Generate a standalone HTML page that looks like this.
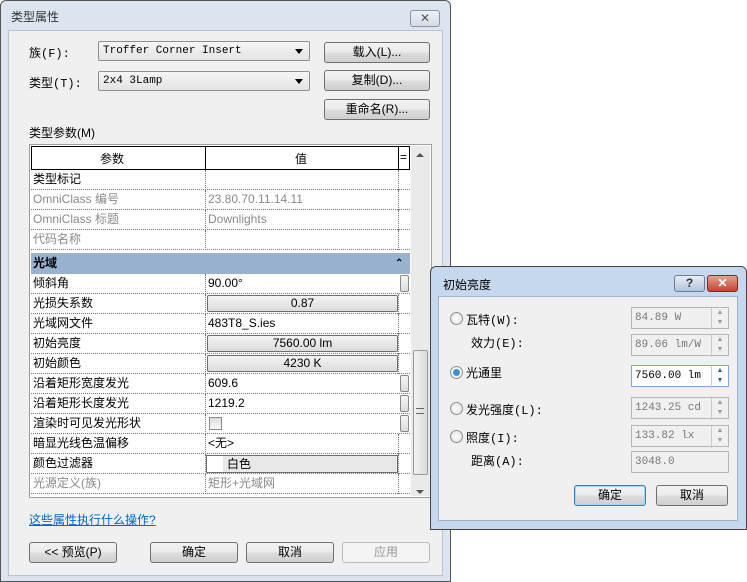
<!DOCTYPE html>
<html><head><meta charset="utf-8">
<style>
*{margin:0;padding:0;box-sizing:border-box}
body{width:747px;height:582px;background:#fff;position:relative;overflow:hidden;font-family:"Liberation Sans","Noto Sans CJK SC",sans-serif;font-size:12px;color:#000}
.a{position:absolute}
.mono{font-family:"Liberation Mono","Noto Sans CJK SC",monospace;font-size:11px}
.btn{position:absolute;border:1px solid #707070;border-radius:3px;background:linear-gradient(#f2f2f2,#ebebeb 50%,#dddddd 51%,#cfcfcf);text-align:center;font-size:12px;line-height:19px}
.combo{position:absolute;border:1px solid #8e8f8f;border-radius:2px;background:linear-gradient(#f6f6f6,#e4e4e4);padding-left:4px;line-height:18px}
.combo:after{content:"";position:absolute;right:6px;top:7px;border-left:4px solid transparent;border-right:4px solid transparent;border-top:5px solid #000}
.row{position:absolute;left:31px;width:379px;height:20px;border-bottom:1px dotted #777;line-height:19px}
.row .p{position:absolute;left:2px;top:0}
.row .v{position:absolute;left:177px;top:0}
.row .d1{position:absolute;left:174px;top:0;height:20px;border-left:1px dotted #777}
.row .d2{position:absolute;left:367px;top:0;height:20px;border-left:1px dotted #777}
.g{color:#8a8a8a}
.vb{position:absolute;left:176px;top:1px;width:191px;height:17px;border:1px solid #6e6e6e;border-radius:2px;background:linear-gradient(#f4f4f4,#dcdcdc);text-align:center;line-height:15px}
.sp{position:absolute;left:369px;top:1px;width:9px;height:17px;border:1px solid #888;border-radius:2px;background:linear-gradient(#f6f6f6,#dcdcdc)}
.rad{position:absolute;width:13px;height:13px;border-radius:50%;border:1px solid #8e8f8f;background:radial-gradient(#fff,#ddd)}
.tb{position:absolute;border:1px solid #b5b5b5;background:#f0f0f0;color:#777;padding-left:3px;line-height:20px}
.spin{position:absolute;width:17px;height:22px;border-left:1px solid #ccc}
</style></head><body>
<!-- main window -->
<div class="a" style="left:0;top:0;width:451px;height:582px;background:#dce5ef;border:1px solid #555;border-radius:6px 6px 0 0"></div>
<div class="a" style="left:11px;top:8px;color:#333;font-size:12px">类型属性</div>
<div class="a" style="left:410px;top:10px;width:30px;height:17px;border:1px solid #8a96a8;border-radius:3px;background:linear-gradient(#eef2f7,#d3dbe6);text-align:center;font-size:12px;line-height:15px;color:#555">✕</div>
<div class="a" style="left:8px;top:30px;width:435px;height:546px;background:#f0f0f0;border:1px solid #b8c4d2"></div>

<div class="a mono" style="left:29px;top:44px;font-size:12px">族(F):</div>
<div class="combo mono" style="left:98px;top:41px;width:212px;height:20px">Troffer Corner Insert</div>
<div class="btn" style="left:324px;top:42px;width:106px;height:21px">载入(L)...</div>
<div class="a mono" style="left:29px;top:74px;font-size:12px">类型(T):</div>
<div class="combo mono" style="left:98px;top:71px;width:212px;height:20px">2x4 3Lamp</div>
<div class="btn" style="left:324px;top:70px;width:106px;height:21px">复制(D)...</div>
<div class="btn" style="left:324px;top:99px;width:106px;height:21px">重命名(R)...</div>
<div class="a" style="left:29px;top:124px;font-size:12px">类型参数(M)</div>

<!-- table -->
<div class="a" style="left:29px;top:144px;width:403px;height:354px;background:#fff;border:1px solid #a0a0a0"></div>
<div class="a" style="left:31px;top:146px;width:379px;height:24px;border:1px solid #000;background:#fff"></div>
<div class="a" style="left:205px;top:146px;width:1px;height:24px;background:#000"></div>
<div class="a" style="left:398px;top:146px;width:1px;height:24px;background:#000"></div>
<div class="a" style="left:100px;top:150px">参数</div>
<div class="a" style="left:295px;top:150px">值</div>
<div class="a" style="left:400px;top:150px">=</div>
<div class="a" style="left:411px;top:146px;width:19px;height:350px;background:#eaeaea"></div>
<div class="a" style="left:416px;top:153px;border-left:4px solid transparent;border-right:4px solid transparent;border-bottom:4px solid #555"></div>
<div class="a" style="left:416px;top:490px;border-left:4px solid transparent;border-right:4px solid transparent;border-top:4px solid #555"></div>
<div class="a" style="left:413px;top:350px;width:15px;height:125px;border:1px solid #999;border-radius:2px;background:linear-gradient(90deg,#f2f2f2,#dadada)"></div>
<div class="a" style="left:416px;top:408px;width:8px;height:6px;border-top:1px solid #666;border-bottom:1px solid #666"></div>

<div class="row" style="top:170px"><span class="p">类型标记</span><span class="d1"></span><span class="d2"></span></div>
<div class="row g" style="top:190px"><span class="p">OmniClass 编号</span><span class="v">23.80.70.11.14.11</span><span class="d1"></span><span class="d2"></span></div>
<div class="row g" style="top:210px"><span class="p">OmniClass 标题</span><span class="v">Downlights</span><span class="d1"></span><span class="d2"></span></div>
<div class="row g" style="top:230px"><span class="p">代码名称</span><span class="d1"></span><span class="d2"></span></div>
<div class="a" style="left:31px;top:253px;width:379px;height:21px;background:#98b2cf;font-weight:bold;line-height:21px;padding-left:2px">光域<span style="position:absolute;left:364px;font-size:10px">⌃</span></div>
<div class="row" style="top:274px"><span class="p">倾斜角</span><span class="v">90.00°</span><span class="d1"></span><span class="sp"></span></div>
<div class="row" style="top:294px"><span class="p">光损失系数</span><span class="d1"></span><span class="vb">0.87</span><span class="d2"></span></div>
<div class="row" style="top:314px"><span class="p">光域网文件</span><span class="v">483T8_S.ies</span><span class="d1"></span><span class="d2"></span></div>
<div class="row" style="top:334px"><span class="p">初始亮度</span><span class="d1"></span><span class="vb">7560.00 lm</span><span class="d2"></span></div>
<div class="row" style="top:354px"><span class="p">初始颜色</span><span class="d1"></span><span class="vb">4230 K</span><span class="d2"></span></div>
<div class="row" style="top:374px"><span class="p">沿着矩形宽度发光</span><span class="v">609.6</span><span class="d1"></span><span class="sp"></span></div>
<div class="row" style="top:394px"><span class="p">沿着矩形长度发光</span><span class="v">1219.2</span><span class="d1"></span><span class="sp"></span></div>
<div class="row" style="top:414px"><span class="p">渲染时可见发光形状</span><span class="d1"></span><span class="a" style="left:178px;top:3px;width:13px;height:13px;border:1px solid #888;background:linear-gradient(#ddd,#fafafa)"></span><span class="sp"></span></div>
<div class="row" style="top:434px"><span class="p">暗显光线色温偏移</span><span class="v">&lt;无&gt;</span><span class="d1"></span><span class="d2"></span></div>
<div class="row" style="top:454px"><span class="p">颜色过滤器</span><span class="d1"></span><span class="a" style="left:175px;top:1px;width:192px;height:18px;border:1px solid #6e6e6e;background:linear-gradient(90deg,#fff 16px,#e8e8e8 16px);padding-left:20px;line-height:16px">白色</span><span class="d2"></span></div>
<div class="row g" style="top:474px"><span class="p">光源定义(族)</span><span class="v">矩形+光域网</span><span class="d1"></span><span class="d2"></span></div>

<div class="a" style="left:29px;top:511px;color:#0066cc;text-decoration:underline">这些属性执行什么操作?</div>
<div class="btn" style="left:29px;top:542px;width:88px;height:21px">&lt;&lt; 预览(P)</div>
<div class="btn" style="left:150px;top:542px;width:88px;height:21px">确定</div>
<div class="btn" style="left:246px;top:542px;width:88px;height:21px">取消</div>
<div class="btn" style="left:342px;top:542px;width:88px;height:21px;color:#999;background:#f4f4f4;border-color:#bbb">应用</div>

<!-- second dialog -->
<div class="a" style="left:430px;top:266px;width:317px;height:264px;background:#c6d8ee;border:1px solid #444;border-radius:6px 6px 0 0"></div>
<div class="a" style="left:443px;top:276px">初始亮度</div>
<div class="a" style="left:674px;top:275px;width:31px;height:17px;border:1px solid #6b7d94;border-radius:3px;background:linear-gradient(#e7eef7,#b3c4da);text-align:center;font-weight:bold;line-height:15px;color:#333">?</div>
<div class="a" style="left:707px;top:275px;width:31px;height:17px;border:1px solid #7a2c20;border-radius:3px;background:linear-gradient(#e8a093,#c5432e);text-align:center;font-weight:bold;line-height:15px;color:#fff">✕</div>
<div class="a" style="left:438px;top:296px;width:300px;height:225px;background:#f0f0f0;border:1px solid #9db3cd"></div>

<div class="rad" style="left:450px;top:312px"></div><div class="a mono" style="left:466px;top:311px;font-size:12px">瓦特(W):</div>
<div class="a mono" style="left:471px;top:334px;font-size:12px">效力(E):</div>
<div class="rad" style="left:450px;top:366px;background:radial-gradient(#3a8fd8 3px,#fff 4px,#ddd)"></div><div class="a" style="left:466px;top:364px">光通里</div>
<div class="rad" style="left:450px;top:402px"></div><div class="a mono" style="left:466px;top:401px;font-size:12px">发光强度(L):</div>
<div class="rad" style="left:450px;top:430px"></div><div class="a mono" style="left:466px;top:429px;font-size:12px">照度(I):</div>
<div class="a mono" style="left:471px;top:452px;font-size:12px">距离(A):</div>

<div class="tb mono" style="left:631px;top:307px;width:98px;height:22px">84.89 W</div>
<div class="tb mono" style="left:631px;top:334px;width:98px;height:22px">89.06 lm/W</div>
<div class="tb mono" style="left:631px;top:365px;width:98px;height:22px;background:#fff;color:#000;border-color:#7aa7d8">7560.00 lm</div>
<div class="tb mono" style="left:631px;top:397px;width:98px;height:22px">1243.25 cd</div>
<div class="tb mono" style="left:631px;top:425px;width:98px;height:22px">133.82 lx</div>
<div class="tb mono" style="left:631px;top:451px;width:98px;height:22px">3048.0</div>
<div class="spin" style="left:711px;top:308px"><div style="font-size:7px;color:#999;text-align:center;line-height:10px">▲<br>▼</div></div>
<div class="spin" style="left:711px;top:335px"><div style="font-size:7px;color:#999;text-align:center;line-height:10px">▲<br>▼</div></div>
<div class="spin" style="left:711px;top:366px"><div style="font-size:7px;color:#3a5f8f;text-align:center;line-height:10px">▲<br>▼</div></div>
<div class="spin" style="left:711px;top:398px"><div style="font-size:7px;color:#999;text-align:center;line-height:10px">▲<br>▼</div></div>
<div class="spin" style="left:711px;top:426px"><div style="font-size:7px;color:#999;text-align:center;line-height:10px">▲<br>▼</div></div>

<div class="btn" style="left:574px;top:485px;width:72px;height:21px;border-color:#3c7fb1;box-shadow:inset 0 0 0 1px #9fd5f5">确定</div>
<div class="btn" style="left:656px;top:485px;width:72px;height:21px">取消</div>
</body></html>
